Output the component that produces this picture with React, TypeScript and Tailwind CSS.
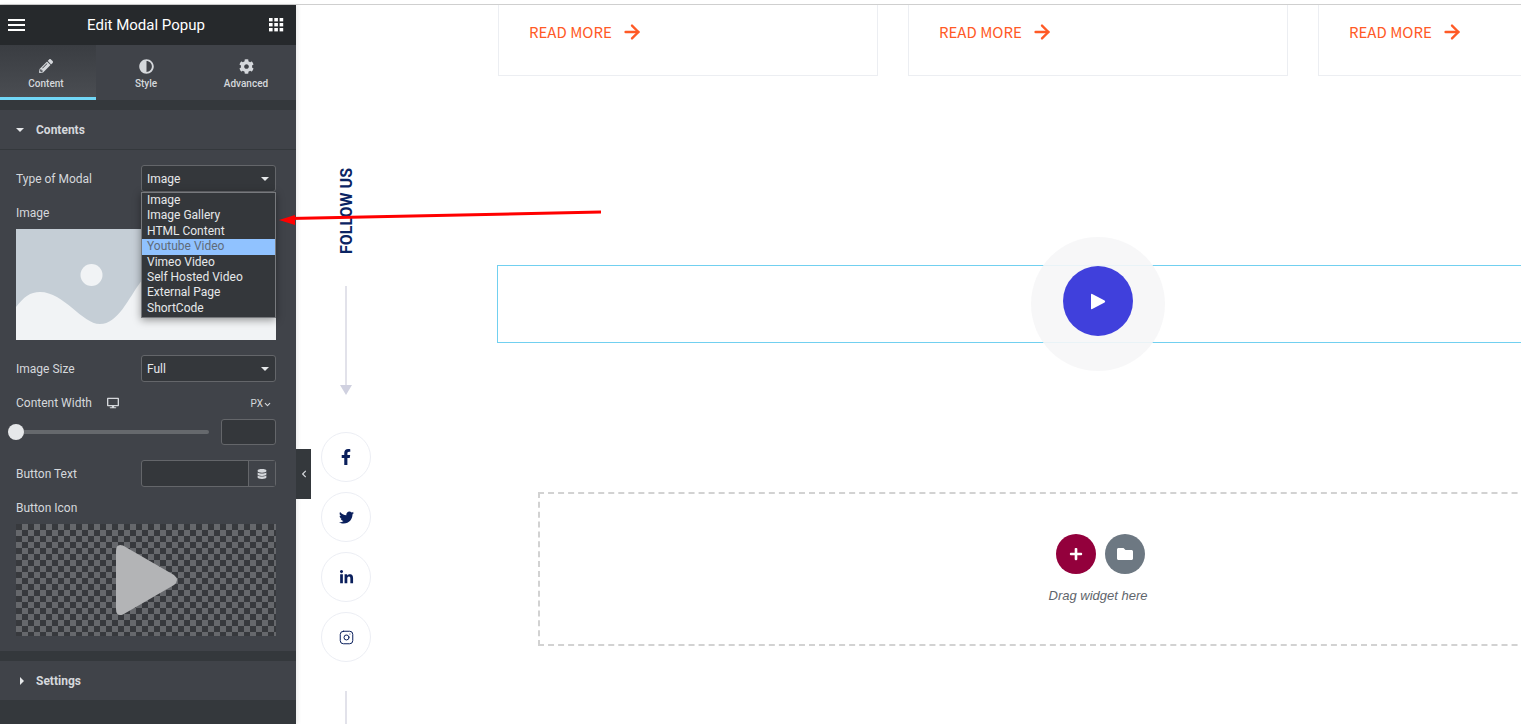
import { ChevronDown, ArrowRight, Instagram } from 'lucide-react'
import {
  FaAdjust,
  FaChevronLeft,
  FaCog,
  FaDatabase,
  FaDesktop,
  FaFacebookF,
  FaFolder,
  FaLinkedinIn,
  FaPencilAlt,
  FaPlus,
  FaTwitter,
} from 'react-icons/fa'

const modalTypes = [
  'Image',
  'Image Gallery',
  'HTML Content',
  'Youtube Video',
  'Vimeo Video',
  'Self Hosted Video',
  'External Page',
  'ShortCode',
]

const socials = [
  { id: 'fb', icon: <FaFacebookF size={16} /> },
  { id: 'tw', icon: <FaTwitter size={15} /> },
  { id: 'in', icon: <FaLinkedinIn size={15} /> },
  { id: 'ig', icon: <Instagram size={15} strokeWidth={1.6} /> },
]

function Caret() {
  return <span className="h-0 w-0 border-x-[4px] border-t-[4px] border-x-transparent border-t-[#e6e8ea]" />
}

function SelectBox({ value }: { value: string }) {
  return (
    <div className="flex h-[27px] w-[135px] items-center justify-between rounded-[3px] border border-[#64666a] bg-[#34373b] pl-[5px] pr-[6px] text-xs text-[#e6e8ea]">
      <span>{value}</span>
      <Caret />
    </div>
  )
}

function Tab({ label, icon, active }: { label: string; icon: React.ReactNode; active?: boolean }) {
  return (
    <div
      className={`flex h-[55px] w-[100px] flex-col items-center border-b-[3px] pt-[13px] ${
        active ? 'border-[#71d7f7] bg-gradient-to-b from-[#3a3d42] to-[#4a4d52]' : 'border-transparent'
      }`}
    >
      <span className="flex h-[16px] items-center text-[#d5d8dc]">{icon}</span>
      <span className="mt-[4px] text-[10px] font-medium leading-[12px] text-[#d5d8dc]">{label}</span>
    </div>
  )
}

function Sidebar() {
  return (
    <aside className="relative z-10 flex h-full w-[296px] shrink-0 flex-col bg-[#34383c] font-['Roboto',sans-serif] shadow-[2px_0_4px_rgba(0,0,0,0.08)]">
      <header className="flex h-[40px] items-center justify-between bg-[#26292c] pl-[8px] pr-[12px]">
        <div className="flex flex-col gap-[3px]">
          <span className="h-[2px] w-[17px] bg-white" />
          <span className="h-[2px] w-[17px] bg-white" />
          <span className="h-[2px] w-[17px] bg-white" />
        </div>
        <h1 className="-translate-x-px text-[15px] font-normal leading-none text-white">Edit Modal Popup</h1>
        <svg width="15" height="14" viewBox="0 0 15 14" fill="#fff">
          {[0, 5.3, 10.6].map((x) =>
            [0, 5, 10].map((y) => <rect key={`${x}-${y}`} x={x} y={y} width="3.6" height="3.4" />),
          )}
        </svg>
      </header>

      <div className="-ml-1 flex w-[300px] bg-[#404349]">
        <Tab label="Content" icon={<FaPencilAlt size={14} />} active />
        <Tab label="Style" icon={<FaAdjust size={15} />} />
        <Tab label="Advanced" icon={<FaCog size={15} />} />
      </div>

      <div className="mt-[10px] bg-[#404349] pb-[15px]">
        <div className="flex h-[40px] items-center gap-[12px] border-b border-[#34383c] pl-[16px]">
          <Caret />
          <span className="text-xs font-bold text-[#d5d8dc]">Contents</span>
        </div>

        <div className="px-[16px] pr-[20px] text-xs text-[#d5d8dc]">
          <div className="mt-[15px] flex items-center justify-between">
            <label>Type of Modal</label>
            <SelectBox value="Image" />
          </div>

          <p className="mt-[14px] leading-[14px]">Image</p>
          <svg className="mt-[9px] block" width="260" height="111" viewBox="0 0 260 111">
            <rect width="260" height="111" fill="#c5ced6" />
            <circle cx="75.5" cy="46" r="11" fill="#f1f3f5" />
            <path
              d="M0 78C8 68 14 63 24 63C48 63 66 95 84 95C102 95 112 70 126 51C150 15 190 10 220 35C240 50 250 55 260 58V111H0Z"
              fill="#f1f3f5"
            />
          </svg>

          <div className="mt-[15px] flex items-center justify-between">
            <label>Image Size</label>
            <SelectBox value="Full" />
          </div>

          <div className="mt-[14px] flex h-[14px] items-center justify-between">
            <div className="flex items-center gap-[15px]">
              <span>Content Width</span>
              <FaDesktop size={12} />
            </div>
            <span className="mr-[4px] mt-[2px] flex items-center text-[10px]">
              PX
              <ChevronDown size={9} strokeWidth={3} />
            </span>
          </div>

          <div className="mt-[9px] flex h-[26px] items-center justify-between">
            <div className="relative h-[4px] w-[193px] rounded-full bg-[#66696d]">
              <span className="absolute left-[-8px] top-[-6px] h-[16px] w-[16px] rounded-full bg-[#e6e8ea]" />
            </div>
            <div className="h-[26px] w-[55px] rounded-[3px] border border-[#64666a] bg-[#34373b]" />
          </div>

          <div className="mt-[15px] flex items-center justify-between">
            <label>Button Text</label>
            <div className="flex h-[27px] w-[135px] rounded-[3px] border border-[#64666a] bg-[#34373b]">
              <span className="flex-1" />
              <span className="flex w-[27px] items-center justify-center border-l border-[#64666a] bg-[#404349]">
                <FaDatabase size={10} />
              </span>
            </div>
          </div>

          <p className="mt-[14px] leading-[14px]">Button Icon</p>
          <div className="mt-[9px] flex h-[112px] w-[260px] items-center justify-center bg-[conic-gradient(#66686c_25%,#37393d_0_50%,#66686c_0_75%,#37393d_0)] bg-[length:12px_12px]">
            <svg width="64" height="72" viewBox="0 0 64 72" className="ml-[1px]">
              <path d="M1 7Q1 -1 8 1.5L59 31Q65 36 59 41L8 70.5Q1 73 1 65Z" fill="#b3b4b6" />
            </svg>
          </div>
        </div>
      </div>

      <div className="mt-[10px] flex h-[39px] items-center gap-[12px] bg-[#404349] pl-[20px]">
        <span className="h-0 w-0 border-y-[4px] border-l-[4px] border-y-transparent border-l-[#e6e8ea]" />
        <span className="text-xs font-bold text-[#d5d8dc]">Settings</span>
      </div>

      {/* open select list */}
      <ul className="absolute left-[141px] top-[187px] w-[135px] border border-[#77797d] bg-[#34373b] pb-px text-xs text-[#e6e8ea] shadow-[0_2px_8px_rgba(0,0,0,0.4)]">
        {modalTypes.map((type) => (
          <li
            key={type}
            className={`h-[15.4px] pl-[5px] leading-[15.4px] ${type === 'Youtube Video' ? 'bg-[#90c2ff] text-[#5f6b7a]' : ''}`}
          >
            {type}
          </li>
        ))}
      </ul>

      <button className="absolute right-[-15px] top-[444px] flex h-[50px] w-[15px] items-center justify-center bg-[#34383c] text-[#d5d8dc]">
        <FaChevronLeft size={8} />
      </button>
    </aside>
  )
}

function FollowColumn() {
  return (
    <div className="flex w-[100px] shrink-0 flex-col items-center font-['Roboto',sans-serif]">
      <span className="mt-[163px] shrink-0 rotate-180 whitespace-nowrap text-base font-bold leading-[15px] text-[#0a2463] [writing-mode:vertical-rl]">
        FOLLOW US
      </span>
      <span className="mt-[32px] h-[99px] w-[2px] shrink-0 bg-[#e2e2ea]" />
      <span className="h-0 w-0 shrink-0 border-x-[6px] border-t-[10px] border-x-transparent border-t-[#d0d1e0]" />
      <div className="mt-[37px] flex shrink-0 flex-col gap-[10px]">
        {socials.map((s) => (
          <div
            key={s.id}
            className="flex h-[50px] w-[50px] items-center justify-center rounded-full border border-[#eceef4] text-[#0a1f5c]"
          >
            {s.icon}
          </div>
        ))}
      </div>
      <span className="mt-[29px] h-[40px] w-[2px] shrink-0 bg-[#e2e2ea]" />
    </div>
  )
}

function ReadMoreCard() {
  return (
    <div className="flex h-[71px] w-[380px] shrink-0 items-start gap-[9px] border-x border-b border-[#eceef2] pl-[30px] pt-[17px] font-['Noto_Sans_CJK_SC','Noto_Sans',sans-serif] text-[15px] leading-[20px] text-[#ff5a26]">
      <span>READ MORE</span>
      <ArrowRight size={22} strokeWidth={2.6} className="-mt-[1px]" />
    </div>
  )
}

export default function App() {
  return (
    <div className="relative h-[724px] w-[1521px] overflow-hidden bg-white">
      <div className="h-[5px] border-b border-[#cfcfcf]" />
      <div className="flex h-[719px]">
        <Sidebar />
        <FollowColumn />
        <main className="min-w-0 flex-1 overflow-hidden pl-[101px]">
          <div className="ml-px flex gap-[30px]">
            <ReadMoreCard />
            <ReadMoreCard />
            <ReadMoreCard />
          </div>

          <section className="relative mt-[189px] h-[78px] w-[1100px] border border-[#71d0f0]">
            <div className="absolute left-[533px] top-[-29px] flex h-[134px] w-[134px] justify-center rounded-full bg-[#f6f6f7]/90">
              <div className="mt-[29px] flex h-[70px] w-[70px] items-center justify-center rounded-full bg-[#4040dc]">
                <svg width="16" height="17" viewBox="0 0 16 17" fill="#fff">
                  <path d="M1 1.5Q1 .3 2.2.9L14.6 7.4Q15.8 8.5 14.6 9.6L2.2 16.1Q1 16.7 1 15.5Z" />
                </svg>
              </div>
            </div>
          </section>

          <section className="ml-[41px] mt-[149px] flex h-[154px] w-[1100px] flex-col items-center border-2 border-dashed border-[#d2d2d2] pl-[20px] pt-[40px]">
            <div className="ml-[4px] flex gap-[9px]">
              <span className="flex h-[40px] w-[40px] items-center justify-center rounded-full bg-[#93003c] text-white">
                <FaPlus size={14} />
              </span>
              <span className="flex h-[40px] w-[40px] items-center justify-center rounded-full bg-[#6d7882] text-white">
                <FaFolder size={16} />
              </span>
            </div>
            <p className="mt-[12px] whitespace-nowrap font-['Liberation_Sans',sans-serif] text-[13px] italic text-[#5f656c]">
              Drag widget here
            </p>
          </section>
        </main>
      </div>

      {/* annotation arrow */}
      <svg className="absolute left-[270px] top-[200px] z-20" width="340" height="30" viewBox="0 0 340 30">
        <path d="M331 12L20 18.5" stroke="#f00" strokeWidth="3" />
        <path d="M9 20L25 15V25Z" fill="#f00" />
      </svg>
    </div>
  )
}
